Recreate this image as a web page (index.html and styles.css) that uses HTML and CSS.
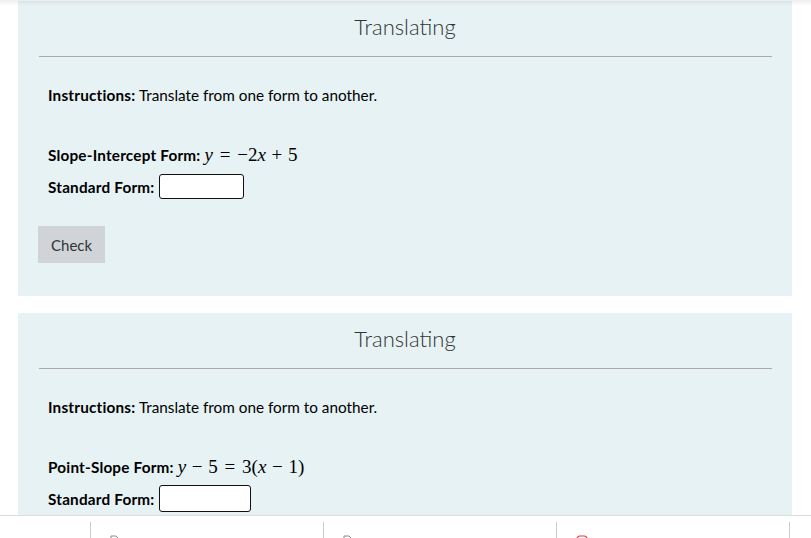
FILE: index.html
```html
<!DOCTYPE html>
<html lang="en">
<head>
<meta charset="utf-8">
<title>Translating</title>
<link rel="stylesheet" href="styles.css">
</head>
<body>
<div class="top-shadow"></div>
<main class="page">
  <section class="card">
    <h2 class="card-title">Translating</h2>
    <hr class="rule">
    <p class="instr"><b>Instructions:</b> Translate from one form to another.</p>
    <div class="problem">
      <div class="given"><b>Slope-Intercept Form:</b> <span class="math"><i>y</i><span class="rel">=</span>−2<i>x</i><span class="bin">+</span>5</span></div>
      <div class="answer"><b>Standard Form:</b><input class="field" type="text"></div>
    </div>
    <button class="btn" type="button">Check</button>
  </section>
  <section class="card">
    <h2 class="card-title">Translating</h2>
    <hr class="rule">
    <p class="instr"><b>Instructions:</b> Translate from one form to another.</p>
    <div class="problem">
      <div class="given"><b>Point-Slope Form:</b> <span class="math"><i>y</i><span class="bin">−</span>5<span class="rel">=</span>3(<i>x</i><span class="bin">−</span>1)</span></div>
      <div class="answer"><b>Standard Form:</b><input class="field wide" type="text"></div>
    </div>
    <button class="btn" type="button">Check</button>
  </section>
</main>
<nav class="bottom-bar">
  <div class="cell"><svg class="ico" width="10" height="12" viewBox="0 0 10 12"><path d="M1 1h5l3 3v7H1z" fill="none" stroke="#888" stroke-width="1"/></svg></div>
  <div class="cell"><svg class="ico" width="10" height="12" viewBox="0 0 10 12"><path d="M1 1h5l3 3v7H1z" fill="none" stroke="#888" stroke-width="1"/></svg></div>
  <div class="cell"><svg class="ico" width="12" height="12" viewBox="0 0 12 12"><rect x="1" y="1" width="10" height="10" rx="3" fill="none" stroke="#e33" stroke-width="1.2"/></svg></div>
</nav>
</body>
</html>
```
FILE: styles.css
```css
html, body {
  margin: 0;
  padding: 0;
  background: #fff;
}
body {
  font-family: "Lato", "Open Sans", sans-serif;
  font-size: 15.3px;
  color: #000;
}
b {
  letter-spacing: 0.2px;
}
.top-shadow {
  position: fixed;
  top: 0;
  left: 0;
  right: 0;
  height: 6px;
  background: linear-gradient(to bottom, rgba(0,0,0,0.07), rgba(0,0,0,0));
  z-index: 5;
}
.page {
  padding: 1px 19px 40px 18px;
}
.card {
  background: #e6f2f4;
  padding: 0 20px 33px;
  margin-bottom: 17px;
}
.card-title {
  margin: 0;
  padding-top: 10px;
  line-height: 32px;
  font-size: 22px;
  font-weight: 300;
  text-align: center;
  color: #333;
}
.rule {
  margin: 13px 0 0 1px;
  border: 0;
  border-top: 1px solid #aaa;
  height: 0;
}
.instr {
  margin: 28px 0 0;
  padding-left: 10px;
  line-height: 20px;
}
.problem {
  margin-top: 40px;
  padding-left: 10px;
}
.given {
  line-height: 20px;
}
.math {
  font-family: "Liberation Serif", "DejaVu Serif", serif;
  font-size: 19px;
}
.math .rel {
  margin: 0 0.36em;
}
.math .bin {
  margin: 0 0.3em;
}
.answer {
  margin-top: 9px;
  display: flex;
  align-items: center;
  height: 25px;
}
.answer b {
  margin-right: 4px;
}
.field {
  box-sizing: border-box;
  width: 85px;
  height: 25px;
  border: 1px solid #111;
  border-radius: 3px;
  background: #fff;
  padding: 0 4px;
  margin: 0;
}
.field.wide {
  width: 92px;
  height: 27px;
}
.btn {
  display: block;
  margin-top: 27px;
  height: 37px;
  padding: 0 13px;
  border: 0;
  border-radius: 0;
  background: #d0d3d8;
  color: #333;
  font-family: inherit;
  font-size: 15px;
}
.bottom-bar {
  position: fixed;
  left: 0;
  right: 0;
  bottom: 0;
  height: 22px;
  background: #fff;
  border-top: 1px solid #ddd;
  display: flex;
  padding-left: 90px;
  z-index: 5;
}
.cell {
  box-sizing: border-box;
  width: 233px;
  margin-top: 6px;
  border-left: 1px solid #ccc;
  padding-left: 19px;
}
.cell:last-child {
  width: 234px;
  border-right: 1px solid #ccc;
}
.ico {
  display: block;
  margin-top: 13px;
}
```
